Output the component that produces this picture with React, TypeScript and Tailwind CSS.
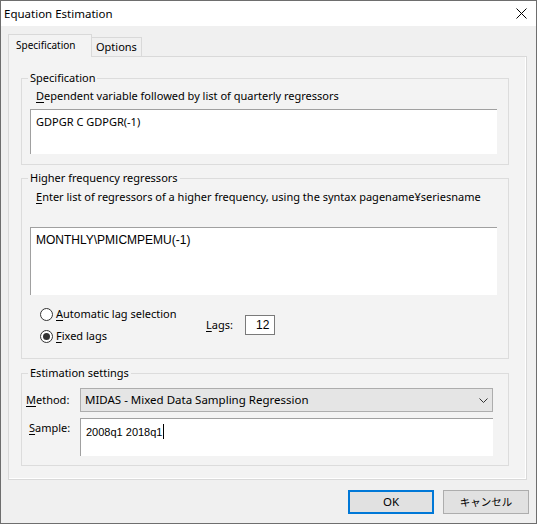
import React from "react";

function Radio({ checked }: { checked?: boolean }) {
  return (
    <span className="w-[13px] h-[13px] rounded-full border border-[#333333] bg-white flex items-center justify-center shrink-0">
      {checked && <span className="w-[7px] h-[7px] rounded-full bg-[#333333]" />}
    </span>
  );
}

function U({ children }: { children: React.ReactNode }) {
  return <span className="underline underline-offset-[2px] decoration-1">{children}</span>;
}

export default function App() {
  return (
    <div className="w-[537px] h-[524px] bg-[#f0f0f0] border border-[#6e6e6e] flex flex-col text-[11px] leading-[16px] text-black font-['Noto_Sans','Noto_Sans_CJK_JP',sans-serif] overflow-hidden">
      {/* Title bar */}
      <div className="h-[25px] bg-white flex items-center justify-between pl-[3px] pr-[9px] shrink-0">
        <span className="text-[11.5px]">Equation Estimation</span>
        <svg width="11" height="11" viewBox="0 0 11 11">
          <path d="M0.5 0.5L10.5 10.5M10.5 0.5L0.5 10.5" stroke="#000" strokeWidth="1" />
        </svg>
      </div>

      <div className="pl-[7px] pt-[8px]">
        {/* Tabs */}
        <div className="flex items-end h-[22px]">
          <div className="relative z-10 -mb-px h-[23px] w-[84px] bg-[#f3f3f3] border border-b-0 border-[#d9d9d9] text-[10px] pl-[7px] pt-[2px]">
            Specification
          </div>
          <div className="-ml-px h-[19px] w-[51px] border border-b-0 border-[#d9d9d9] bg-[#f0f0f0] pl-[4px] pt-[1px]">
            Options
          </div>
        </div>

        {/* Panel */}
        <div className="w-[519px] h-[424px] border border-[#d9d9d9] bg-[#f3f3f3] pt-[13px] pl-[12px] shadow-[inset_-1px_-1px_0_#ffffff]">
          {/* Group 1 */}
          <fieldset className="w-[488px] border border-[#dcdcdc] pb-[10px]">
            <legend className="ml-[6px] px-[2px]">Specification</legend>
            <div className="pl-[14px] pt-[2px]">
              <U>D</U>ependent variable followed by list of quarterly regressors
            </div>
            <div className="ml-[8px] mt-[5px] w-[467px] h-[45px] bg-white border-t border-l border-[#a0a0a0] pl-[5px] pt-[4px]">
              GDPGR C GDPGR(-1)
            </div>
          </fieldset>

          {/* Group 2 */}
          <fieldset className="w-[488px] mt-[5px] border border-[#dcdcdc] pb-[11px]">
            <legend className="ml-[6px] px-[2px]">Higher frequency regressors</legend>
            <div className="pl-[14px] pt-[3px] whitespace-nowrap">
              <U>E</U>nter list of regressors of a higher frequency, using the syntax pagename¥seriesname
            </div>
            <div className="ml-[8px] mt-[22px] w-[467px] h-[68px] bg-white border-t border-l border-[#a0a0a0] pl-[5px] pt-[4px] text-[12px] font-['Liberation_Sans',Arial,sans-serif]">
              MONTHLY\PMICMPEMU(-1)
            </div>
            <div className="flex items-center mt-[8px]">
              <div className="ml-[18px] w-[166px] flex flex-col">
                <div className="flex items-center h-[22px] gap-[3px]">
                  <Radio />
                  <span>
                    <U>A</U>utomatic lag selection
                  </span>
                </div>
                <div className="flex items-center h-[22px] gap-[3px]">
                  <Radio checked />
                  <span>
                    <U>F</U>ixed lags
                  </span>
                </div>
              </div>
              <span className="w-[39px]">
                <U>L</U>ags:
              </span>
              <div className="w-[30px] h-[20px] bg-white border border-[#7a7a7a] pl-[10px] leading-[18px] text-[12px] font-['Liberation_Sans',Arial,sans-serif]">
                12
              </div>
            </div>
          </fieldset>

          {/* Group 3 */}
          <fieldset className="w-[488px] mt-[6px] border border-[#dcdcdc] pb-[9px]">
            <legend className="ml-[6px] px-[2px]">Estimation settings</legend>
            <div className="flex items-center mt-[7px] h-[24px]">
              <span className="ml-[4px] w-[54px]">
                <U>M</U>ethod:
              </span>
              <div className="w-[413px] h-[24px] bg-[#e5e5e5] border border-[#adadad] flex items-center justify-between pl-[4px] pr-[4px]">
                <span className="text-[11.5px]">MIDAS - Mixed Data Sampling Regression</span>
                <svg width="9" height="5" viewBox="0 0 9 5">
                  <path d="M0.5 0.5L4.5 4.5L8.5 0.5" stroke="#333" strokeWidth="1" fill="none" />
                </svg>
              </div>
            </div>
            <div className="flex items-start mt-[6px]">
              <span className="ml-[7px] w-[51px] mt-[2px]">
                <U>S</U>ample:
              </span>
              <div className="w-[413px] h-[38px] bg-white border-t border-l border-[#a0a0a0] pl-[5px] pt-[5px] flex items-start">
                <span className="text-[11px] font-['Liberation_Sans',Arial,sans-serif] leading-[16px]">2008q1 2018q1</span>
                <span className="w-px h-[15px] bg-black ml-px" />
              </div>
            </div>
          </fieldset>
        </div>

        {/* Buttons */}
        <div className="flex justify-end gap-[9px] pr-[7px] mt-[10px]">
          <button className="w-[86px] h-[24px] bg-[#e1e1e1] border-2 border-[#0078d7] flex items-center justify-center text-[11.5px]">
            OK
          </button>
          <button className="w-[86px] h-[24px] bg-[#e1e1e1] border border-[#adadad] flex items-center justify-center text-[10.5px]">
            キャンセル
          </button>
        </div>
      </div>
    </div>
  );
}
